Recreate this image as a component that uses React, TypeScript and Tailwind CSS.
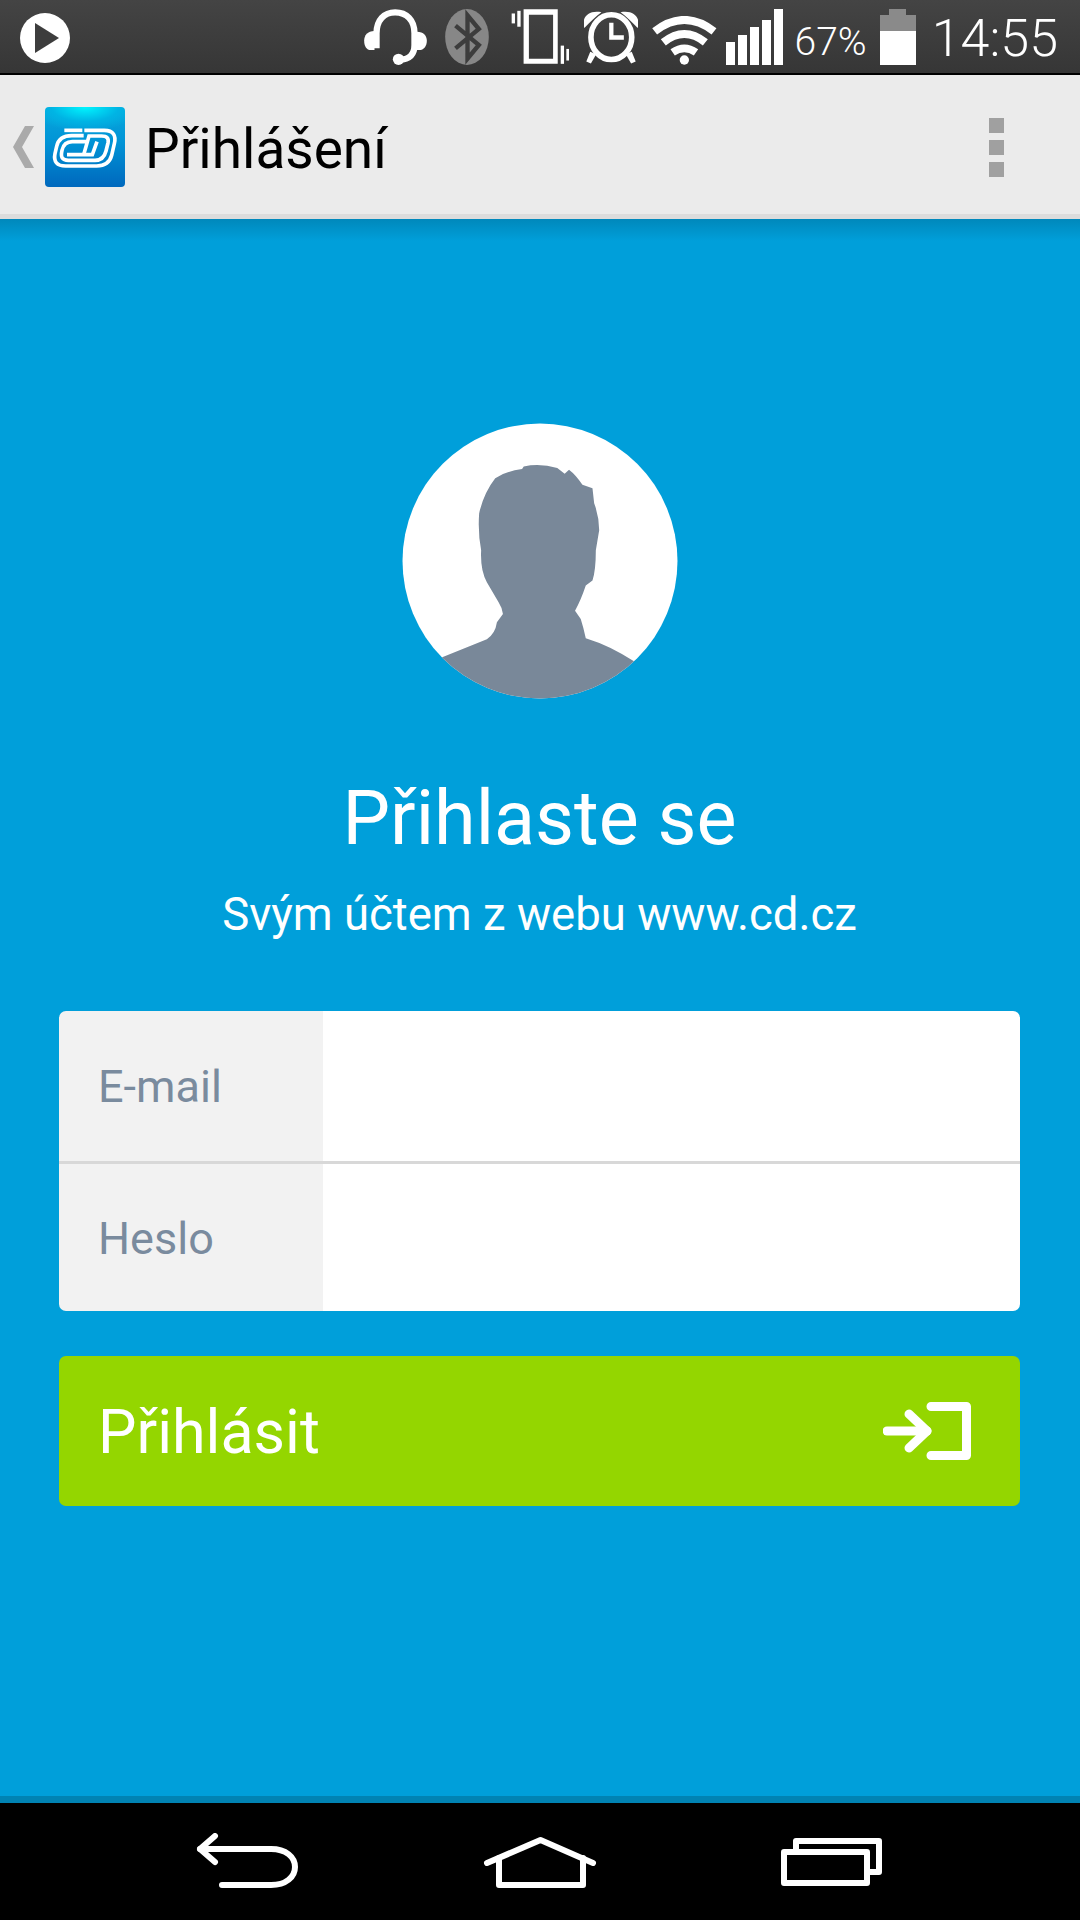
import React from 'react';

const font = 'font-[Roboto,"Noto_Sans",sans-serif]';

const Headset = () => (
  <svg width="63" height="56" viewBox="25 27 188 168" fill="none">
    <path d="M62 145V100C62 60 85 37 118 37C152 37 176 60 176 100V135C176 165 160 178 130 180" stroke="#fff" strokeWidth="19" />
    <path d="M56 93V150H45C32 150 25 138 25 122C25 106 35 93 56 93Z" fill="#fff" />
    <path d="M183 95V150H190C204 150 213 138 213 122C213 108 204 95 183 95Z" fill="#fff" />
    <circle cx="128" cy="178" r="17" fill="#fff" />
  </svg>
);

const Bluetooth = () => (
  <svg width="44" height="56" viewBox="267 27 131 168" fill="none">
    <ellipse cx="332.5" cy="111" rx="65.5" ry="84" fill="#878787" />
    <path d="M298 77L368 135L334 176V46L368 87L298 145" stroke="#3d3d3d" strokeWidth="13" />
  </svg>
);

const Vibrate = () => (
  <svg width="58" height="56" viewBox="463 25 175 168" fill="#fff">
    <path fillRule="evenodd" d="M501 25H604V190H501ZM517 42V175H590V42Z" />
    <rect x="465" y="38" width="10" height="30" />
    <rect x="482" y="30" width="10" height="48" />
    <rect x="613" y="135" width="10" height="55" />
    <rect x="630" y="145" width="8" height="35" />
  </svg>
);

const Alarm = () => (
  <svg width="54" height="53" viewBox="25 33 164 160" fill="none" className="mt-[2px]">
    <ellipse cx="108" cy="112" rx="62" ry="68" stroke="#fff" strokeWidth="17" />
    <path d="M108 68V113H146" stroke="#fff" strokeWidth="13" />
    <path d="M26 84C16 55 36 28 78 36C62 48 42 66 26 84Z" fill="#fff" />
    <path d="M188 84C198 55 178 28 136 36C152 48 172 66 188 84Z" fill="#fff" />
    <path d="M62 164L46 192L32 186L44 156Z" fill="#fff" />
    <path d="M152 164L168 192L182 186L170 156Z" fill="#fff" />
  </svg>
);

const Wifi = () => (
  <svg width="65" height="49" viewBox="228 46 195 147" fill="none" className="mt-[7px]">
    <path d="M236 92Q325 24 414 92" stroke="#fff" strokeWidth="24" />
    <path d="M262 125Q325 75 388 125" stroke="#fff" strokeWidth="24" />
    <path d="M290 155Q325 131 360 155" stroke="#fff" strokeWidth="23" />
    <circle cx="325" cy="178" r="14" fill="#fff" />
  </svg>
);

const Signal = () => (
  <div className="flex h-[56px] items-end gap-[3px]">
    <div className="h-[23px] w-[9px] bg-white" />
    <div className="h-[30px] w-[9px] bg-white" />
    <div className="h-[38px] w-[9px] bg-white" />
    <div className="h-[45px] w-[9px] bg-white" />
    <div className="h-[56px] w-[9px] bg-white" />
  </div>
);

const Battery = () => (
  <div className="flex h-[56px] w-[36px] flex-col items-center">
    <div className="h-[6px] w-[17px] bg-[#8a8a8a]" />
    <div className="h-[16px] w-full bg-[#8a8a8a]" />
    <div className="w-full flex-1 bg-white" />
  </div>
);

const CdLogo = () => (
  <div className="flex h-[80px] w-[80px] items-center justify-center rounded-[4px] bg-[radial-gradient(ellipse_70%_30%_at_50%_0%,#00f6ff_0%,#00b4e4_60%,transparent_100%),linear-gradient(to_bottom,#08a8dc_0%,#0093d6_45%,#0068bd_100%)]">
    <svg width="80" height="80" viewBox="120 20 240 240" fill="none" stroke="#fff" strokeWidth="11">
      <path d="M178 90H232" />
      <path d="M238 90H298C325 90 334 106 328 130L320 165C314 188 298 197 275 197H182C156 197 145 184 150 160L155 138C160 116 176 106 200 106H236" />
      <path d="M244 124H202C184 124 175 132 171 150C166 172 172 180 190 180H270C288 180 298 172 303 152L309 128C312 114 306 107 290 107H252L236 163" />
      <path d="M186 163H262L276 124" />
    </svg>
  </div>
);

const Silhouette = () => (
  <svg width="276" height="276" viewBox="67 72 823 820">
    <clipPath id="avatar-clip">
      <circle cx="478.5" cy="482" r="410" />
    </clipPath>
    <circle cx="478.5" cy="482" r="410" fill="#fff" />
    <path
      clipPath="url(#avatar-clip)"
      fill="#798899"
      d="M185 770L320 715Q345 700 350 665L368 640Q365 620 355 605L320 545Q300 510 303 450Q293 400 297 340Q310 280 345 235Q375 215 425 208L430 200Q480 190 530 205L552 222L565 210Q585 225 605 255L635 265L640 310Q655 350 655 390L645 450Q645 510 635 540L615 555Q600 600 583 630L600 655Q608 680 615 712Q690 735 760 782V900H185Z"
    />
  </svg>
);

const LoginArrow = () => (
  <svg width="88" height="58" viewBox="0 0 88 58" fill="none" stroke="#fff" strokeWidth="9" strokeLinecap="round" strokeLinejoin="round">
    <path d="M4 29H44" />
    <path d="M26 12L44 29L26 46" />
    <path d="M48 4.5H83.5V53.5H48" />
  </svg>
);

const FormRow = ({ label, height }: { label: string; height: string }) => (
  <div className={`flex ${height}`}>
    <div className="flex w-[264px] items-center bg-[#f2f2f2] pl-[39px] pt-[2px] text-[45px] text-[#7a8b9e]">{label}</div>
    <div className="flex-1 bg-white" />
  </div>
);

export default function App() {
  return (
    <div className={`flex h-[1920px] w-[1080px] flex-col overflow-hidden bg-black ${font}`}>
      {/* status bar */}
      <div className="flex h-[75px] shrink-0 items-start justify-between border-b-2 border-black bg-gradient-to-b from-[#444444] to-[#363636] pt-[9px] pl-[20px] pr-[22px] text-white">
        <div className="mt-[4px] flex h-[50px] w-[50px] items-center justify-center rounded-full bg-white">
          <svg width="24" height="30" viewBox="0 0 24 30" className="ml-[4px]">
            <path d="M0 0L24 15L0 30Z" fill="#3d3d3d" />
          </svg>
        </div>
        <div className="flex items-start">
          <Headset />
          <div className="ml-[18px]"><Bluetooth /></div>
          <div className="ml-[22px]"><Vibrate /></div>
          <div className="ml-[15px]"><Alarm /></div>
          <div className="ml-[14px]"><Wifi /></div>
          <div className="ml-[9px]"><Signal /></div>
          <div className="ml-[12px] mt-[10px] text-[39px] leading-[46px] font-light">67%</div>
          <div className="ml-[13px]"><Battery /></div>
          <div className="ml-[16px] mt-[2px] text-[52px] leading-[56px] font-light">14:55</div>
        </div>
      </div>

      {/* action bar */}
      <div className="flex h-[144px] shrink-0 items-center border-b-[5px] border-[#dcdcdc] bg-[#ebebeb] pt-[5px]">
        <svg width="21" height="42" viewBox="0 0 21 42" className="ml-[13px]">
          <path d="M12 0H21L9 21L21 42H12L0 21Z" fill="#aaaaaa" />
        </svg>
        <div className="ml-[11px]"><CdLogo /></div>
        <h1 className="ml-[20px] pt-[4px] text-[55px] leading-none text-black">Přihlášení</h1>
        <div className="ml-auto mr-[76px] flex flex-col gap-[7px]">
          <div className="h-[15px] w-[15px] bg-[#a0a0a0]" />
          <div className="h-[15px] w-[15px] bg-[#a0a0a0]" />
          <div className="h-[15px] w-[15px] bg-[#a0a0a0]" />
        </div>
      </div>

      {/* login */}
      <main className="relative flex flex-1 flex-col items-center bg-[#009fda] pl-[59px] pr-[60px] pt-[204px] text-white">
        <div className="absolute inset-x-0 top-0 h-[22px] bg-gradient-to-b from-[#0088bb] to-[#009fda]" />
        <Silhouette />
        <h2 className="mt-[75px] text-[75.5px] leading-[88px]">Přihlaste se</h2>
        <p className="mt-[28px] text-[45.5px] leading-[50px]">Svým účtem z webu www.cd.cz</p>
        <div className="mt-[71px] w-full overflow-hidden rounded-[7px]">
          <FormRow label="E-mail" height="h-[150px]" />
          <div className="h-[3px] bg-[#d8d8d8]" />
          <FormRow label="Heslo" height="h-[147px]" />
        </div>
        <button className="mt-[45px] flex h-[150px] w-full items-center justify-between rounded-[7px] bg-[#94d600] pl-[39px] pr-[49px] text-[61px]">
          <span className="pt-[3px]">Přihlásit</span>
          <LoginArrow />
        </button>
        <div className="absolute inset-x-0 bottom-0 h-[7px] bg-[#0083b3]" />
      </main>

      {/* nav bar */}
      <nav className="flex h-[117px] shrink-0 items-start gap-[184px] bg-black pl-[196px] pt-[30px]">
        <svg width="103" height="55" viewBox="0 0 103 55" fill="none" stroke="#fff" strokeWidth="6" strokeLinecap="round" strokeLinejoin="round">
          <path d="M19 3L4 16L19 29" />
          <path d="M4 16H75C90 16 99 24 99 34C99 44 90 52 75 52H26" />
        </svg>
        <svg width="114" height="52" viewBox="0 0 114 52" fill="none" stroke="#fff" strokeWidth="6" strokeLinecap="round" strokeLinejoin="round" className="mt-[3px]">
          <path d="M4 27L57.5 4L110 27" />
          <path d="M16 22V49H100V22" />
        </svg>
        <svg width="101" height="48" viewBox="0 0 101 48" fill="none" stroke="#fff" strokeWidth="6" strokeLinejoin="round" className="mt-[5px]">
          <rect x="3" y="14" width="83" height="31" />
          <path d="M15 11V3H98V34H89" />
        </svg>
      </nav>
    </div>
  );
}
